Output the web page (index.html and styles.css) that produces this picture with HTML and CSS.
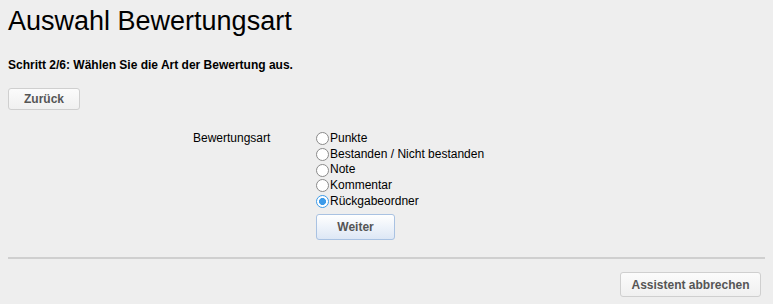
FILE: index.html
```html
<!DOCTYPE html>
<html lang="de">
  <head>
    <meta charset="UTF-8" />
    <title>Auswahl Bewertungsart</title>
    <link rel="stylesheet" href="styles.css">
  </head>
  <body>
    <div class="wizard">
      <h1>Auswahl Bewertungsart</h1>
      <p class="step">Schritt 2/6: Wählen Sie die Art der Bewertung aus.</p>

      <div class="nav-top">
        <button class="btn">Zurück</button>
      </div>

      <form class="form-row">
        <div class="form-label">Bewertungsart</div>
        <div class="form-field">
          <label class="option"><input type="radio" name="art" value="punkte">Punkte</label>
          <label class="option"><input type="radio" name="art" value="bestanden">Bestanden / Nicht bestanden</label>
          <label class="option"><input type="radio" name="art" value="note">Note</label>
          <label class="option"><input type="radio" name="art" value="kommentar">Kommentar</label>
          <label class="option"><input type="radio" name="art" value="ordner" checked>Rückgabeordner</label>
          <button type="button" class="btn btn-primary">Weiter</button>
        </div>
      </form>

      <div class="footer">
        <button class="btn">Assistent abbrechen</button>
      </div>
    </div>
  </body>
</html>
```

FILE: styles.css
```css
* {
  box-sizing: border-box;
}

body {
  margin: 0;
  background: #eeeeee;
  font-family: "Liberation Sans", Arial, sans-serif;
  color: #000;
}

.wizard {
  padding: 0 8px;
}

h1 {
  margin: 0;
  padding-top: 5px;
  font-size: 27px;
  font-weight: normal;
  line-height: 32px;
}

.step {
  margin: 20px 0 0;
  font-size: 12px;
  font-weight: bold;
  line-height: 16px;
}

.nav-top {
  margin-top: 15px;
}

.btn {
  display: inline-block;
  height: 22px;
  padding: 0 14px;
  font-family: inherit;
  font-size: 12px;
  font-weight: bold;
  color: #555;
  background: linear-gradient(#fbfbfb, #f0f0f0);
  border: 1px solid #cfcfcf;
  border-radius: 3px;
}

.nav-top .btn {
  width: 72px;
}

.form-row {
  display: flex;
  margin: 21px 0 0 185px;
}

.form-label {
  width: 123px;
  font-size: 12px;
  line-height: 15px;
}

.form-field {
  display: flex;
  flex-direction: column;
  align-items: flex-start;
}

.option {
  display: flex;
  align-items: center;
  font-size: 12px;
  line-height: 15.7px;
  height: 15.7px;
}

.option input {
  appearance: none;
  margin: 0 1px 0 0;
  width: 13px;
  height: 13px;
  border: 1px solid #8a8a8a;
  border-radius: 50%;
  background: #fff;
}

.option input:checked {
  border-color: #3d9be9;
  background: radial-gradient(circle, #3d9be9 0, #3d9be9 3.2px, #fff 3.8px);
}

.btn-primary {
  width: 79px;
  height: 26px;
  margin-top: 5px;
  background: linear-gradient(#ffffff, #dde7f5);
  border-color: #a9c2e2;
}

.footer {
  margin-top: 17px;
  border-top: 2px solid #cfcfcf;
  padding: 13px 4px 0 0;
  text-align: right;
}

.footer .btn {
  width: 141px;
  height: 25px;
  padding: 0;
}
```
